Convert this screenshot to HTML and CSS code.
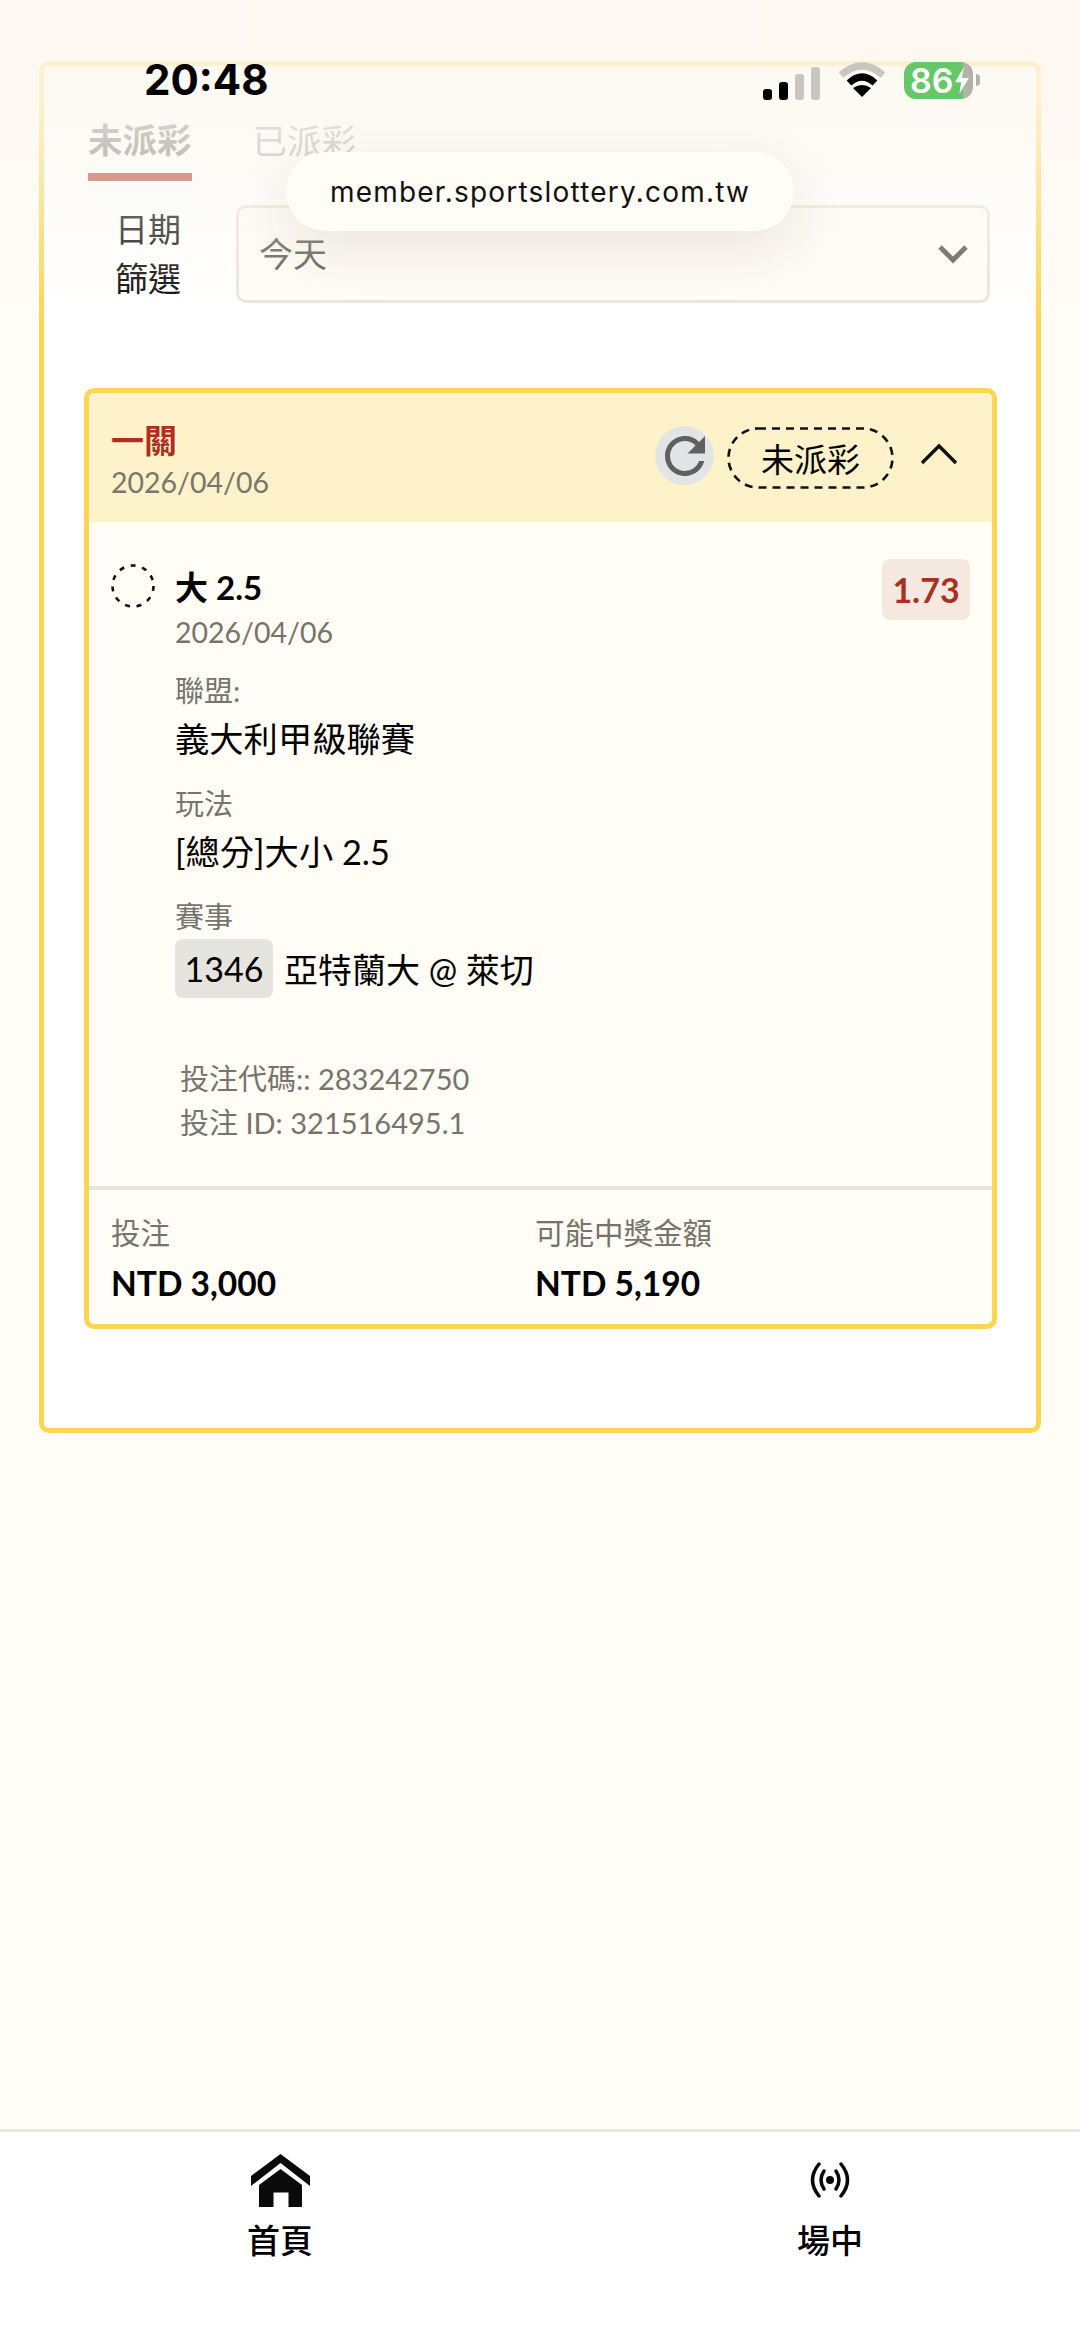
FILE: index.html
```html
<!DOCTYPE html>
<html lang="zh-Hant">
<head>
<meta charset="utf-8">
<title>未派彩</title>
<link rel="stylesheet" href="styles.css">
</head>
<body>
<main class="page">
  <section class="panel">
    <div class="tabs">
      <div class="tab tab-active">未派彩</div>
      <div class="tab tab-idle">已派彩</div>
    </div>
    <div class="filter">
      <div class="filter-label">日期<br>篩選</div>
      <div class="select">
        <span>今天</span>
        <svg class="select-chevron" viewBox="0 0 30 20"><path d="M2 3 L15 16 L28 3"/></svg>
      </div>
    </div>
    <article class="card">
      <header class="card-head">
        <div>
          <div class="parlay">一關</div>
          <div class="muted-date">2026/04/06</div>
        </div>
        <div class="head-actions">
          <div class="refresh">
            <svg viewBox="0 0 24 24"><path d="M17.65 6.35A7.958 7.958 0 0 0 12 4c-4.42 0-7.99 3.58-7.99 8s3.57 8 7.99 8c3.73 0 6.84-2.55 7.73-6h-2.08A5.99 5.99 0 0 1 12 18c-3.31 0-6-2.69-6-6s2.69-6 6-6c1.66 0 3.14.69 4.22 1.78L13 11h7V4l-2.35 2.35z"/></svg>
          </div>
          <div class="pill">
            <svg class="pill-dash" viewBox="0 0 167 62"><rect x="1.5" y="1.5" width="164" height="59" rx="29.5"/></svg>
            未派彩
          </div>
          <svg class="head-chevron" viewBox="0 0 38 22"><path d="M2 20 L19 3 L36 20"/></svg>
        </div>
      </header>
      <div class="selection">
        <svg class="dash-circle" viewBox="0 0 44 44"><circle cx="22" cy="22" r="20.5"/></svg>
        <div class="detail">
          <div class="pick">大 2.5</div>
          <div class="muted-date">2026/04/06</div>
          <div class="field-label first">聯盟:</div>
          <div class="field-value">義大利甲級聯賽</div>
          <div class="field-label">玩法</div>
          <div class="field-value">[總分]大小 2.5</div>
          <div class="field-label">賽事</div>
          <div class="match">
            <span class="match-no">1346</span>
            <span class="match-name">亞特蘭大 @ 萊切</span>
          </div>
        </div>
        <div class="odds">1.73</div>
      </div>
      <div class="refs">
        <div>投注代碼:: 283242750</div>
        <div>投注 ID: 321516495.1</div>
      </div>
      <footer class="card-foot">
        <div>
          <div class="foot-label">投注</div>
          <div class="foot-value">NTD 3,000</div>
        </div>
        <div>
          <div class="foot-label">可能中獎金額</div>
          <div class="foot-value">NTD 5,190</div>
        </div>
      </footer>
    </article>
  </section>
</main>

<nav class="nav">
  <div class="nav-item">
    <div class="nav-icon">
      <svg class="home-icon" viewBox="0 0 59 53"><path d="M29.5 0 L59 22 V32 L29.5 9 L0 32 V22 Z"/><path d="M29.5 15 L51 31 V53 H37.5 V38.5 H22.5 V53 H8 V31 Z"/></svg>
    </div>
    <div class="nav-text">首頁</div>
  </div>
  <div class="nav-item">
    <div class="nav-icon">
      <svg class="live-icon" viewBox="0 0 46 36"><circle cx="23" cy="18" r="4"/><path class="arc" d="M12 2 Q-1 18 12 34 M17 9 Q11 18 17 27 M34 2 Q47 18 34 34 M29 9 Q35 18 29 27"/></svg>
    </div>
    <div class="nav-text">場中</div>
  </div>
</nav>

<div class="fade"></div>

<div class="status">
  <div class="clock">20:48</div>
  <div class="status-icons">
    <div class="signal">
      <span class="bar bar-1"></span><span class="bar bar-2"></span><span class="bar bar-3"></span><span class="bar bar-4"></span>
    </div>
    <svg class="wifi" viewBox="0 0 48 36"><path class="wifi-outer" d="M3 13 Q24 -5 45 13"/><path class="wifi-mid" d="M11 21 Q24 9 37 21"/><path class="wifi-in" d="M15 26 Q24 20 33 26 L24 35 Z"/></svg>
    <div class="battery"><span>86</span><svg class="bolt" viewBox="0 0 16 30"><path d="M10 0 L0 17 H7 L5 30 L16 12 H8 Z"/></svg></div>
    <span class="nub"></span>
  </div>
</div>

<div class="toast">member.sportslottery.com.tw</div>
</body>
</html>
```

FILE: styles.css
```css
* { box-sizing: border-box; }
html, body { margin: 0; padding: 0; }
body {
  width: 1080px;
  height: 2347px;
  display: flex;
  flex-direction: column;
  background: #fffdf6;
  color: #000;
  font-family: Lato, "Noto Sans CJK TC", sans-serif;
  overflow: hidden;
}
.page { flex: 1; padding: 61px 39px 0; }
.panel {
  height: 1372px;
  border: 5px solid #fad653;
  border-radius: 10px;
  background: #fff;
}
.tabs { display: flex; gap: 61px; padding: 54px 0 0 44px; }
.tab { font-size: 34.5px; line-height: 40px; }
.tab-active {
  font-weight: 700;
  color: #6f6b65;
  padding-bottom: 13px;
  border-bottom: 8px solid #ac3022;
}
.tab-idle { color: #a4a29d; margin-top: 1px; }
.filter { display: flex; align-items: center; gap: 38px; margin: 24px 46px 0 54px; }
.filter-label { width: 100px; text-align: center; font-size: 33px; line-height: 49px; color: #000; }
.select {
  flex: 1;
  height: 98px;
  display: flex;
  align-items: center;
  justify-content: space-between;
  padding: 0 19px 3px 20px;
  border: 3px solid #e8e5dd;
  border-radius: 10px;
  background: #fffdf6;
  font-size: 34px;
  color: #56534d;
}
.select-chevron { width: 30px; height: 20px; margin-top: 3px; }
.select-chevron path { fill: none; stroke: #56534d; stroke-width: 5; }
.card {
  margin: 85px 39px 0 40px;
  border: 5px solid #fad653;
  border-radius: 10px;
  background: #fffdf6;
  overflow: hidden;
}
.card-head {
  height: 129px;
  display: flex;
  justify-content: space-between;
  align-items: flex-start;
  padding: 26px 34px 0 22px;
  background: #fdf2c9;
}
.parlay { font-size: 33px; line-height: 42px; font-weight: 700; color: #ac3022; }
.muted-date { font-size: 28.5px; line-height: 42px; color: #7b766c; }
.head-actions { display: flex; align-items: center; margin-top: 7px; }
.refresh {
  width: 59px;
  height: 59px;
  margin-bottom: 4px;
  border-radius: 50%;
  background: #e3e4e6;
  display: flex;
  align-items: center;
  justify-content: center;
}
.refresh svg { width: 60px; height: 60px; flex: none; fill: #5f6062; }
.pill {
  position: relative;
  width: 167px;
  height: 62px;
  margin-left: 13px;
  display: flex;
  align-items: center;
  justify-content: center;
  font-size: 33px;
}
.pill-dash { position: absolute; inset: 0; width: 167px; height: 62px; }
.pill-dash rect { fill: none; stroke: #111; stroke-width: 2.6; stroke-dasharray: 8 6; }
.head-chevron { width: 38px; height: 22px; margin: 0 0 8px 26px; }
.head-chevron path { fill: none; stroke: #111; stroke-width: 3.4; }
.selection { display: flex; padding: 37px 22px 0 22px; }
.dash-circle { width: 44px; height: 44px; flex: none; margin: 5px 20px 0 0; }
.dash-circle circle { fill: none; stroke: #111; stroke-width: 2.6; stroke-dasharray: 5 6.7; }
.detail { flex: 1; margin-top: 5px; }
.pick { font-size: 33px; line-height: 46px; font-weight: 700; }
.detail .muted-date { line-height: 44px; color: #77736b; }
.field-label { margin-top: 23px; font-size: 29px; line-height: 38px; color: #77736d; }
.field-label.first { margin-top: 18px; }
.field-value { margin-top: 6px; font-size: 34.3px; line-height: 46px; }
.match { display: flex; align-items: center; gap: 11px; margin-top: 3px; font-size: 34px; }
.match-no {
  width: 98px;
  height: 59px;
  display: flex;
  align-items: center;
  justify-content: center;
  border-radius: 8px;
  background: #e6e4de;
}
.odds {
  width: 88px;
  height: 61px;
  display: flex;
  align-items: center;
  justify-content: center;
  border-radius: 8px;
  background: #f5e8e0;
  font-size: 34px;
  font-weight: 700;
  color: #ac3022;
}
.refs { margin-top: 59px; padding-left: 91px; font-size: 29px; line-height: 44px; color: #77736d; }
.card-foot {
  display: grid;
  grid-template-columns: 424px 1fr;
  margin-top: 41px;
  padding: 22px 22px 18px;
  border-top: 4px solid #e8e5dd;
}
.foot-label { font-size: 29.5px; line-height: 42px; color: #77736b; }
.foot-value { margin-top: 6px; font-size: 33.5px; line-height: 46px; font-weight: 700; }
.nav {
  height: 218px;
  display: flex;
  justify-content: center;
  gap: 450px;
  padding: 21px 0 0 30px;
  border-top: 3px solid #e6e6e6;
  background: #fff;
}
.nav-item { width: 100px; display: flex; flex-direction: column; align-items: center; }
.nav-icon { height: 54px; display: flex; align-items: center; justify-content: center; }
.home-icon { width: 59px; height: 53px; fill: #0a0a0a; }
.live-icon { width: 46px; height: 36px; fill: #0a0a0a; }
.live-icon .arc { fill: none; stroke: #0a0a0a; stroke-width: 3.5; stroke-linecap: round; }
.nav-text { margin-top: 10px; font-size: 33px; line-height: 46px; font-weight: 500; }
.fade {
  position: absolute;
  left: 0;
  top: 0;
  width: 1080px;
  height: 320px;
  background: linear-gradient(180deg, rgba(252,248,240,.8) 0, rgba(252,248,240,.8) 100px, rgba(252,248,240,.53) 177px, rgba(252,248,240,0) 320px);
}
.status {
  position: absolute;
  left: 0;
  top: 56px;
  width: 1080px;
  height: 48px;
  display: flex;
  justify-content: space-between;
  align-items: center;
  padding: 0 100px 0 144px;
}
.clock { font-family: Inter, sans-serif; font-size: 42px; font-weight: 700; line-height: 48px; }
.status-icons { display: flex; align-items: center; }
.signal { display: flex; align-items: flex-end; gap: 7px; height: 33px; margin-top: 6px; }
.bar { width: 9px; border-radius: 3px; background: #000; }
.bar-1 { height: 11px; }
.bar-2 { height: 18px; }
.bar-3 { height: 26px; background: #c8c6c0; }
.bar-4 { height: 33px; background: #c8c6c0; }
.wifi { width: 48px; height: 36px; margin-left: 18px; }
.wifi-outer { fill: none; stroke: #c8c6c0; stroke-width: 7; }
.wifi-mid { fill: none; stroke: #000; stroke-width: 7; }
.wifi-in { fill: #000; }
.battery {
  width: 69px;
  height: 37px;
  margin-left: 18px;
  display: flex;
  align-items: center;
  gap: 1px;
  padding-left: 6px;
  border-radius: 12px;
  background: linear-gradient(90deg, #66c768 86%, #b3b1aa 86%);
  color: #fff;
  font-family: Inter, sans-serif;
  font-size: 34px;
  font-weight: 600;
  line-height: 37px;
}
.bolt { width: 14px; height: 27px; flex: none; fill: #fff; }
.nub { width: 4px; height: 12px; margin-left: 3px; border-radius: 0 4px 4px 0; background: #b3b1aa; }
.toast {
  position: absolute;
  left: 286px;
  top: 152px;
  width: 508px;
  height: 79px;
  display: flex;
  align-items: center;
  justify-content: center;
  border-radius: 40px;
  background: #fffdf6;
  box-shadow: 0 20px 60px rgba(60,50,30,.1);
  font-family: Inter, sans-serif;
  font-size: 28px;
  letter-spacing: 1.2px;
  color: #111;
}
```
